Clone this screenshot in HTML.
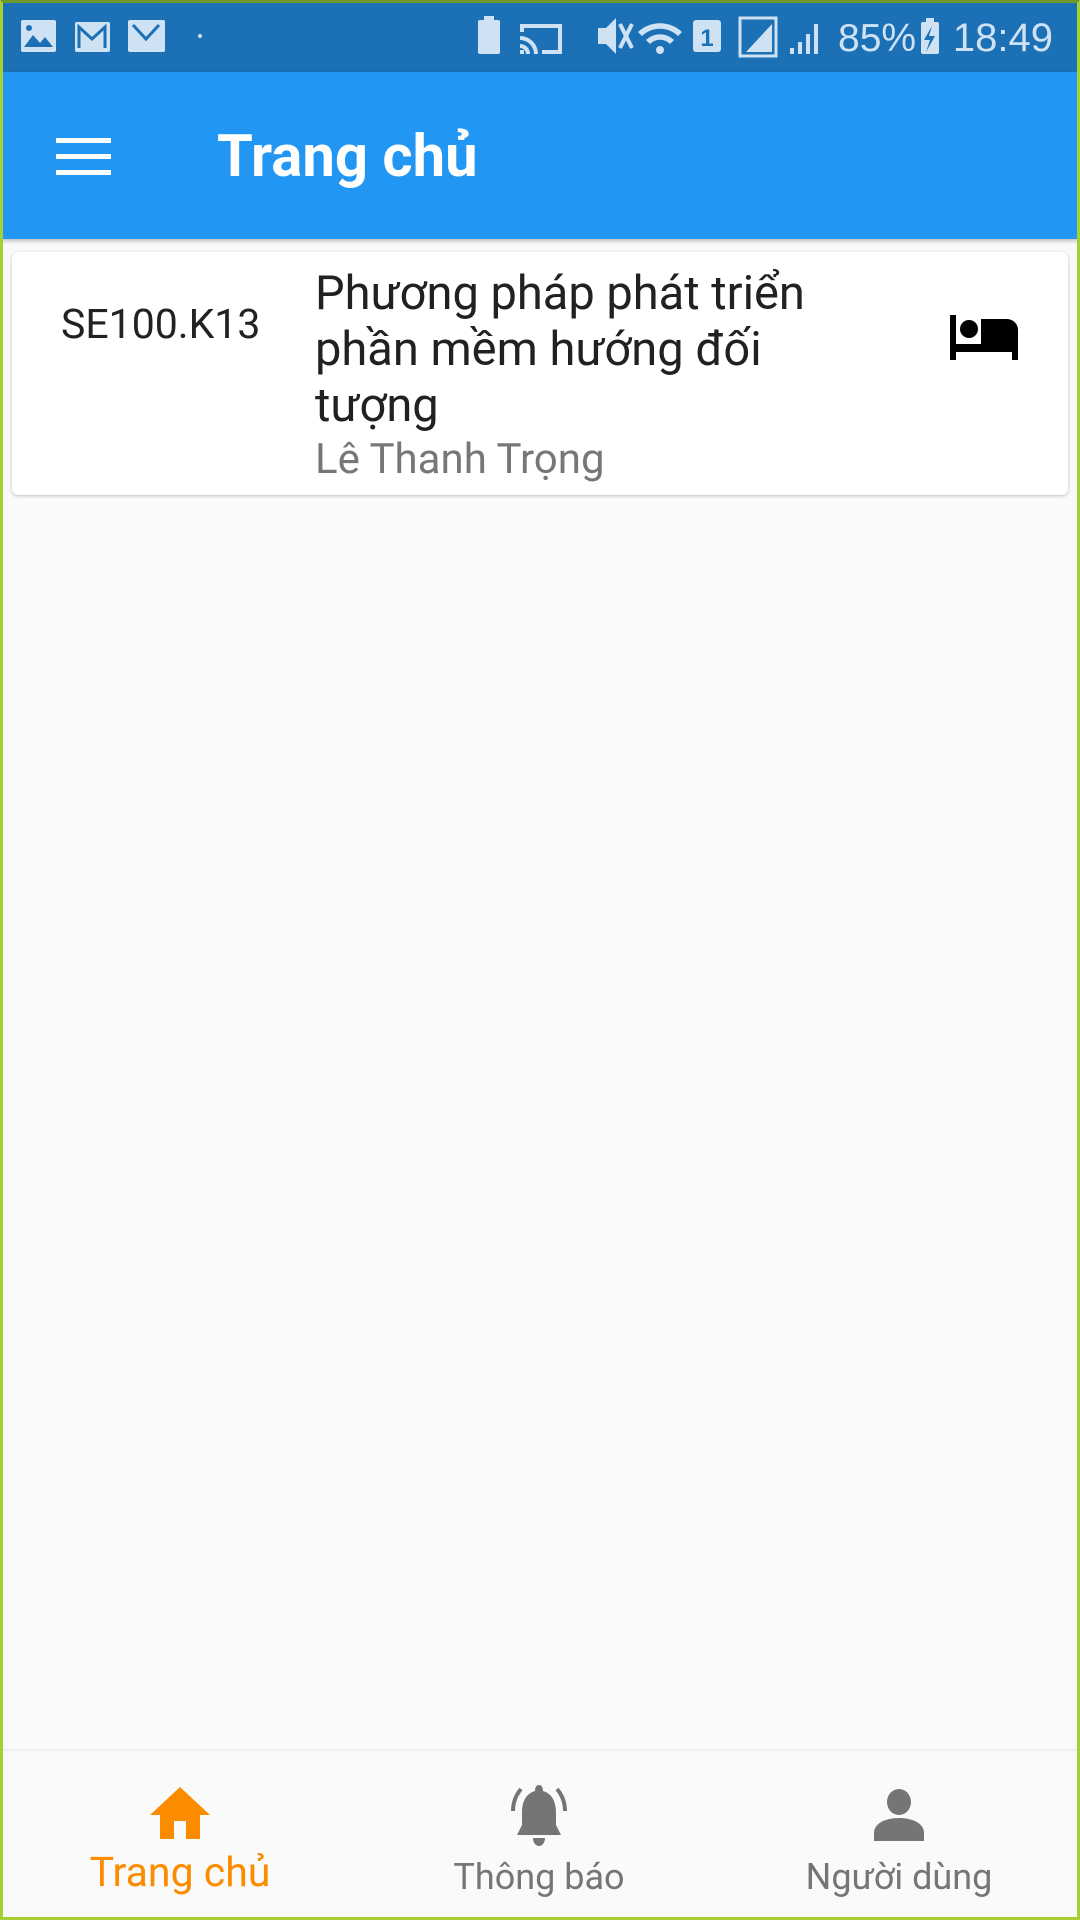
<!DOCTYPE html>
<html><head><meta charset="utf-8"><style>
*{margin:0;padding:0;box-sizing:border-box}
html,body{width:1080px;height:1920px;overflow:hidden}
body{background:#fafafa;font-family:"Roboto","Liberation Sans",sans-serif;position:relative}
.frame{position:absolute;inset:0;border:3px solid #a6cf34;border-top-color:#6e9b2c;z-index:10;pointer-events:none}
.status{position:absolute;left:0;top:0;width:1080px;height:72px;background:#1b70b6;color:#cfe2f3}
.appbar{position:absolute;left:0;top:72px;width:1080px;height:167px;background:#2196f3;box-shadow:0 2px 4px rgba(0,0,0,.25)}
.ham{position:absolute;left:56px;width:55px;height:5px;background:#fff}
.title{position:absolute;left:217px;top:52px;font-size:58px;font-weight:bold;color:#fff;line-height:66px}
.card{position:absolute;left:12px;top:252px;width:1056px;height:243px;background:#fff;border-radius:6px;box-shadow:0 1px 3px rgba(0,0,0,.25)}
.code{position:absolute;left:49px;top:50px;font-size:41px;color:#222;line-height:46px}
.t{position:absolute;left:303px;top:14px;font-size:47px;line-height:56px;color:#212121;white-space:nowrap}
.sub{position:absolute;left:303px;top:183px;font-size:42px;line-height:50px;color:#777}
.nav{position:absolute;left:0;top:1751px;width:1080px;height:169px;background:#fafafa;box-shadow:0 -1px 3px rgba(0,0,0,.08)}
.lbl{position:absolute;top:104px;font-size:36px;line-height:44px;color:#757575;text-align:center;width:300px}
</style></head><body>
<div class="status">
 <svg width="1080" height="72" style="position:absolute;left:0;top:0" fill="#cfe2f3">
  <rect x="21" y="20" width="35" height="32" rx="2"/>
  <path d="M24 47 l9-12 7 8 5-6 8 10z" fill="#1b70b6"/><circle cx="29" cy="28" r="3" fill="#1b70b6"/>
  <rect x="75" y="22" width="35" height="30" rx="2"/>
  <path d="M79 48 V27 l13 12 13-12 V48" stroke="#1b70b6" stroke-width="3" fill="none"/>
  <rect x="128" y="20" width="37" height="32" rx="2"/>
  <path d="M133 25 l13 14 13-14" stroke="#1b70b6" stroke-width="3" fill="none"/>
  <circle cx="200" cy="36" r="2"/>
  <rect x="478" y="20" width="22" height="34" rx="2"/><rect x="484" y="16" width="10" height="5"/>
  <path d="M520 24 h42 v30 h-20 v-4 h16 v-22 h-34 v4 h-4z"/><path d="M520 36 a18 18 0 0 1 18 18 h-4 a14 14 0 0 0-14-14z M520 44 a10 10 0 0 1 10 10 h-4 a6 6 0 0 0-6-6z M520 50 h4 v4 h-4z"/>
  <path d="M598 28 h8 l10-10 v36 l-10-10 h-8z"/><path d="M620 24 l12 24 M632 24 l-12 24" stroke="#cfe2f3" stroke-width="4"/>
  <path d="M638 32 a32 32 0 0 1 44 0 l-4 4 a26 26 0 0 0-36 0z M646 40 a20 20 0 0 1 28 0 l-4 4 a14 14 0 0 0-20 0z"/><circle cx="660" cy="50" r="4"/>
  <rect x="693" y="20" width="28" height="32" rx="3"/>
  <text x="707" y="46" font-size="24" font-weight="bold" fill="#1b70b6" text-anchor="middle" font-family="Liberation Sans">1</text>
  <rect x="740" y="18" width="36" height="38" fill="none" stroke="#cfe2f3" stroke-width="3"/>
  <path d="M746 52 h26 v-28z"/>
  <path d="M790 54 h4 v-6 h-4z M798 54 h4 v-12 h-4z M806 54 h4 v-20 h-4z M814 54 h4 v-30 h-4z"/>
  <rect x="921" y="22" width="18" height="32" rx="2"/><rect x="926" y="18" width="8" height="5"/>
  <path d="M932 26 l-8 14 h6 l-4 12 9-16 h-6z" fill="#1b70b6"/>
  <text x="838" y="51" font-size="39" font-family="Liberation Sans">85%</text>
  <text x="1053" y="51" font-size="40" font-family="Liberation Sans" text-anchor="end">18:49</text>
 </svg>
</div>
<div class="appbar">
 <div class="ham" style="top:66px"></div><div class="ham" style="top:82px"></div><div class="ham" style="top:98px"></div>
 <div class="title">Trang chủ</div>
</div>
<div class="card">
 <div class="code">SE100.K13</div>
 <div class="t">Phương pháp phát triển<br>phần mềm hướng đối<br>tượng</div>
 <div class="sub">Lê Thanh Trọng</div>
 <svg style="position:absolute;left:938px;top:63px" width="68" height="45" viewBox="0 0 68 45">
  <rect x="0" y="0" width="6" height="45"/><circle cx="19" cy="14" r="9"/>
  <path d="M31 4 h26 a11 11 0 0 1 11 11 v30 h-6 v-8 h-56 v-8 h25z"/>
 </svg>
</div>
<div class="nav">
 <svg style="position:absolute;left:150px;top:36px" width="60" height="52" viewBox="0 0 60 52"><path d="M30 0 L60 28 H50 V52 H36 V34 H24 V52 H10 V28 H0z" fill="#fb8c00"/></svg>
 <div class="lbl" style="left:30px;color:#fb8c00;font-size:41px;top:98px;line-height:48px">Trang chủ</div>
 <svg style="position:absolute;left:509px;top:34px" width="60" height="62" viewBox="0 0 60 62"><path d="M30 0 c3 0 4 3 4 6 c10 3 13 12 13 22 v12 l5 10 H8 l5-10 V28 c0-10 3-19 13-22 c0-3 1-6 4-6z M24 53 h12 c0 5-3 8-6 8 s-6-3-6-8z" fill="#757575"/><path d="M12 4 c-5 6-8 14-8 22 M48 4 c5 6 8 14 8 22" stroke="#757575" stroke-width="4" fill="none"/></svg>
 <div class="lbl" style="left:389px">Thông báo</div>
 <svg style="position:absolute;left:874px;top:38px" width="50" height="52" viewBox="0 0 50 52"><ellipse cx="25" cy="13" rx="12" ry="13" fill="#757575"/><path d="M0 52 V44 c0-10 12-15 25-15 s25 5 25 15 v8z" fill="#757575"/></svg>
 <div class="lbl" style="left:749px">Người dùng</div>
</div>
<div class="frame"></div>
</body></html>
